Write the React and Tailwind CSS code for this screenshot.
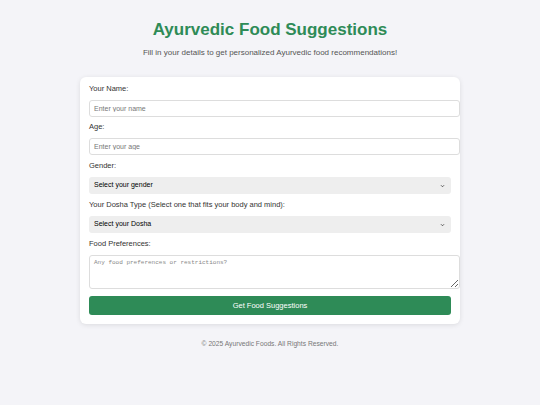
import { useState } from "react";

const Chevron = () => (
  <svg className="pointer-events-none absolute right-[6px] top-1/2 -translate-y-1/2 w-[5px] h-[5px] text-[#333]" viewBox="0 0 10 10" fill="none" stroke="currentColor" strokeWidth={1.6}>
    <path d="M2 3.5l3 3 3-3" />
  </svg>
);

const App = () => {
  const [form, setForm] = useState({ name: "", age: "", gender: "", dosha: "", prefs: "" });
  const update = (key) => (e) => setForm({ ...form, [key]: e.target.value });

  const inputCls =
    "block w-[371px] h-[17px] px-[4px] bg-white border border-[#dddddd] rounded-[3px] text-[7px] text-gray-800 placeholder:text-[#777] outline-none";
  const selectCls =
    "block w-full h-[17px] pl-[5px] appearance-none bg-[#eeeeee] rounded-[3px] text-[7px] text-black outline-none";
  const labelCls = "block text-[7.5px] leading-[10px] text-[#333]";

  return (
    <div className="min-h-screen bg-[#f4f4f8] font-['Liberation_Sans',Arial,sans-serif] pt-[20px]">
      {/* Header */}
      <h1 className="text-center text-[17px] leading-[20px] font-bold text-[#2e8b57]">Ayurvedic Food Suggestions</h1>
      <p className="mt-[7px] text-center text-[8px] leading-[12px] text-[#555]">
        Fill in your details to get personalized Ayurvedic food recommendations!
      </p>

      {/* Form card */}
      <form className="mx-auto mt-[18px] w-[380px] bg-white rounded-[6px] shadow-[0_1px_5px_rgba(0,0,0,0.1)] px-[9px] pt-[7px] pb-[9px]">
        <label className={labelCls}>Your Name:</label>
        <input className={`${inputCls} mt-[6px]`} placeholder="Enter your name" value={form.name} onChange={update("name")} />

        <label className={`${labelCls} mt-[5px]`}>Age:</label>
        <input className={`${inputCls} mt-[6px]`} placeholder="Enter your age" value={form.age} onChange={update("age")} />

        <label className={`${labelCls} mt-[6px]`}>Gender:</label>
        <div className="relative mt-[6px]">
          <select className={selectCls} value={form.gender} onChange={update("gender")}>
            <option value="">Select your gender</option>
            <option>Male</option>
            <option>Female</option>
            <option>Other</option>
          </select>
          <Chevron />
        </div>

        <label className={`${labelCls} mt-[6px]`}>Your Dosha Type (Select one that fits your body and mind):</label>
        <div className="relative mt-[6px]">
          <select className={selectCls} value={form.dosha} onChange={update("dosha")}>
            <option value="">Select your Dosha</option>
            <option>Vata</option>
            <option>Pitta</option>
            <option>Kapha</option>
          </select>
          <Chevron />
        </div>

        <label className={`${labelCls} mt-[6px]`}>Food Preferences:</label>
        <textarea
          className="block mt-[6px] w-[371px] h-[34px] px-[4px] py-[3px] bg-white border border-[#dddddd] rounded-[3px] font-['Liberation_Mono',monospace] text-[6px] leading-[8px] placeholder:text-[#888] outline-none"
          placeholder="Any food preferences or restrictions?"
          value={form.prefs}
          onChange={update("prefs")}
        />

        <button
          type="button"
          className="block mt-[7px] w-full h-[19px] rounded-[3px] bg-[#2e8b57] text-white text-[7.5px]"
        >
          Get Food Suggestions
        </button>
      </form>

      {/* Footer */}
      <p className="mt-[15px] text-center text-[6.7px] leading-[10px] text-[#777]">© 2025 Ayurvedic Foods. All Rights Reserved.</p>
    </div>
  );
};

export default App;
